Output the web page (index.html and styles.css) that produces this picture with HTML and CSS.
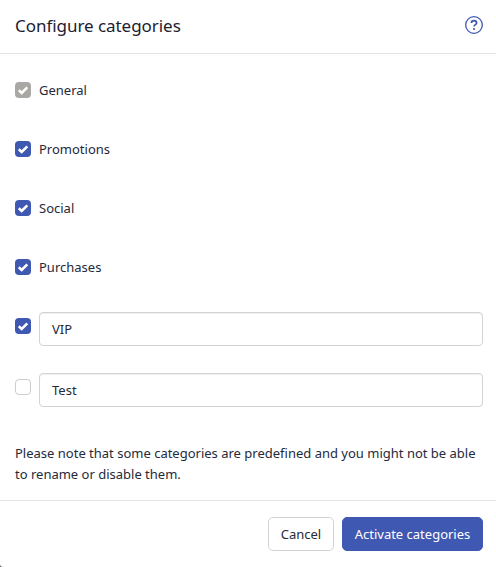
FILE: index.html
```html
<!DOCTYPE html>
<html lang="en">
<head>
<meta charset="utf-8">
<title>Configure categories</title>
<link rel="stylesheet" href="styles.css">
</head>
<body>
<div class="dialog">
  <header class="head">
    <h1 class="title">Configure categories</h1>
    <svg class="help" width="20" height="20" viewBox="0 0 20 20" aria-hidden="true">
      <circle cx="10" cy="10" r="8.3" fill="none" stroke="#3f58b1" stroke-width="1.3"/>
      <path d="M7.4 8a2.6 2.4 0 0 1 5.2 0c0 1.6-2.5 1.7-2.5 3.4" fill="none" stroke="#3f58b1" stroke-width="1.7"/>
      <circle cx="10" cy="14" r="1.1" fill="#3f58b1"/>
    </svg>
  </header>
  <main class="body">
    <div class="row"><span class="box box-disabled"><svg width="16" height="16" viewBox="0 0 16 16"><path d="M3.8 8.2l2.9 2.7L12.3 5.4" fill="none" stroke="#fff" stroke-width="2.6"/></svg></span><span class="label">General</span></div>
    <div class="row"><span class="box box-on"><svg width="16" height="16" viewBox="0 0 16 16"><path d="M3.8 8.2l2.9 2.7L12.3 5.4" fill="none" stroke="#fff" stroke-width="2.6"/></svg></span><span class="label">Promotions</span></div>
    <div class="row"><span class="box box-on"><svg width="16" height="16" viewBox="0 0 16 16"><path d="M3.8 8.2l2.9 2.7L12.3 5.4" fill="none" stroke="#fff" stroke-width="2.6"/></svg></span><span class="label">Social</span></div>
    <div class="row"><span class="box box-on"><svg width="16" height="16" viewBox="0 0 16 16"><path d="M3.8 8.2l2.9 2.7L12.3 5.4" fill="none" stroke="#fff" stroke-width="2.6"/></svg></span><span class="label">Purchases</span></div>
    <div class="row-input"><span class="box box-on"><svg width="16" height="16" viewBox="0 0 16 16"><path d="M3.8 8.2l2.9 2.7L12.3 5.4" fill="none" stroke="#fff" stroke-width="2.6"/></svg></span><input class="field" type="text" value="VIP"></div>
    <div class="row-input"><span class="box box-off"></span><input class="field" type="text" value="Test"></div>
    <p class="note">Please note that some categories are predefined and you might not be able to rename or disable them.</p>
  </main>
  <footer class="foot">
    <button class="btn btn-plain" type="button">Cancel</button>
    <button class="btn btn-primary" type="button">Activate categories</button>
  </footer>
</div>
</body>
</html>
```
FILE: styles.css
```css
html, body { margin: 0; padding: 0; height: 100%; }
html { background: #fff; }
body { background: #5a5a5a; font-family: "Noto Sans", "Open Sans", sans-serif; color: #252a3a; overflow: hidden; }
.dialog { width: 496px; height: 567px; box-sizing: border-box; display: flex; flex-direction: column; background: #fff; border-bottom-left-radius: 3px; }
.head { height: 54px; box-sizing: border-box; border-bottom: 1px solid #e4e4e4; display: flex; align-items: center; justify-content: space-between; padding: 0 12px 2px 15px; }
.title { margin: 0; font-size: 17px; font-weight: 400; line-height: 24px; color: #1c2130; letter-spacing: -0.05px; }
.help { display: block; margin-bottom: 2px; }
.body { flex: 1; padding: 28px 13px 0 15px; }
.row { height: 16px; margin-bottom: 43px; display: flex; align-items: center; gap: 8px; }
.row-input { display: flex; gap: 8px; align-items: flex-start; height: 34px; margin-bottom: 27px; }
.row + .row-input { margin-top: -6px; }
.box { width: 16px; height: 16px; border-radius: 4px; box-sizing: border-box; display: block; flex: none; }
.box svg { display: block; }
.row-input .box { margin-top: 6px; }
.box-on { background: #3f58b1; }
.box-disabled { background: #aaa8a4; }
.box-off { border: 1px solid #cfcdc8; background: #fff; }
.label { font-size: 13px; line-height: 16px; }
.field { flex: 1; min-width: 0; height: 34px; box-sizing: border-box; border: 1px solid #d3d3d6; border-radius: 4px; padding: 0 12px; font: 13px "Noto Sans", sans-serif; color: #252a3a; background: #fff; box-shadow: inset 0 1px 1px #f0f0f2; outline: none; }
.note { margin: 36px 0 0; font-size: 13px; line-height: 21px; }
.foot { height: 67px; box-sizing: border-box; border-top: 1px solid #e4e4e4; display: flex; justify-content: flex-end; gap: 8px; padding: 16px 13px 0 0; }
.btn { height: 34px; box-sizing: border-box; border-radius: 5px; font: 13px "Noto Sans", sans-serif; padding: 0; white-space: nowrap; }
.btn-plain { width: 66px; border: 1px solid #d3d3d6; background: #fff; color: #252a3a; }
.btn-primary { width: 141px; border: 1px solid #3f58b1; background: #3f58b1; color: #fff; }
```
